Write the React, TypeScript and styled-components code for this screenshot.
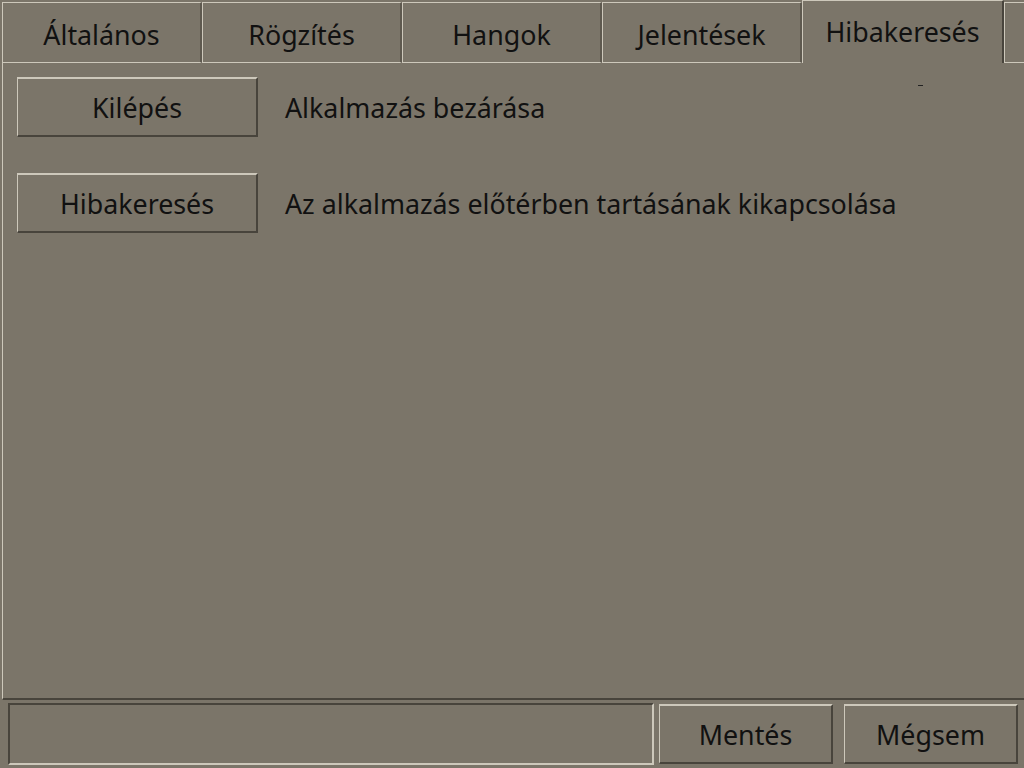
import React from 'react';
import styled, { createGlobalStyle } from 'styled-components';

const GlobalStyle = createGlobalStyle`
    html, body {
        margin: 0;
        padding: 0;
        background: #7b7569;
    }
    * {
        box-sizing: border-box;
    }
`;

const LIGHT = '#cdc8bb';
const DARK = '#48443c';

const Window = styled.div`
    display: flex;
    flex-direction: column;
    width: 1024px;
    height: 768px;
    overflow: hidden;
    background: #7b7569;
    color: #111;
    font-family: "Noto Sans", "Open Sans", sans-serif;
    font-size: 26.8px;
`;

const TabBar = styled.div`
    display: flex;
    flex-direction: row;
    align-items: flex-end;
    height: 63px;
    padding-left: 2px;
    flex-shrink: 0;
`;

const Tab = styled.div<{ $active?: boolean; $width?: number }>`
    display: flex;
    align-items: center;
    justify-content: center;
    width: ${p => p.$width ?? 200}px;
    height: ${p => (p.$active ? 63 : 61)}px;
    padding-top: ${p => (p.$active ? 0 : 3)}px;
    padding-bottom: ${p => (p.$active ? 2 : 0)}px;
    border-top: 1px solid ${LIGHT};
    border-left: 1px solid ${LIGHT};
    border-right: 2px solid ${p => (p.$active ? DARK : '#5e594f')};
    border-bottom: ${p => (p.$active ? 'none' : `1px solid ${LIGHT}`)};
    white-space: nowrap;
    flex-shrink: 0;
`;

const Panel = styled.div`
    position: relative;
    flex: 1;
    display: flex;
    flex-direction: column;
    gap: 36px;
    padding: 14px 14px;
    border-left: 1px solid ${LIGHT};
    border-bottom: 2px solid ${DARK};
    margin-left: 2px;
`;

const Row = styled.div`
    display: flex;
    flex-direction: row;
    align-items: center;
    gap: 27px;
`;

const Button = styled.button<{ $width?: number }>`
    width: ${p => p.$width ?? 241}px;
    height: 60px;
    margin: 0;
    padding: 0;
    background: #7b7569;
    color: #111;
    font: inherit;
    border-top: 2px solid ${LIGHT};
    border-left: 1px solid ${LIGHT};
    border-right: 2px solid ${DARK};
    border-bottom: 2px solid ${DARK};
    flex-shrink: 0;
`;

const Label = styled.span`
    white-space: nowrap;
`;

const Tick = styled.span`
    position: absolute;
    top: 22px;
    left: 915px;
    width: 5px;
    height: 1px;
    background: #222;
`;

const Footer = styled.div`
    display: flex;
    flex-direction: row;
    align-items: center;
    height: 68px;
    padding: 3px 6px 3px 8px;
    gap: 5px;
    flex-shrink: 0;
`;

const StatusBox = styled.div`
    flex: 1;
    height: 62px;
    border-top: 2px solid ${DARK};
    border-left: 2px solid ${DARK};
    border-right: 2px solid ${LIGHT};
    border-bottom: 2px solid ${LIGHT};
`;

const FooterButtons = styled.div`
    display: flex;
    gap: 11px;
    flex-shrink: 0;
`;

const tabs = ['Általános', 'Rögzítés', 'Hangok', 'Jelentések', 'Hibakeresés'];

export default function App() {
    return (
        <Window>
            <GlobalStyle />
            <TabBar>
                {tabs.map((t, i) => (
                    <Tab key={t} $active={i === 4} $width={i === 4 ? 202 : 200}>{t}</Tab>
                ))}
                <Tab $width={40} />
            </TabBar>
            <Panel>
                <Tick />
                <Row>
                    <Button>Kilépés</Button>
                    <Label>Alkalmazás bezárása</Label>
                </Row>
                <Row>
                    <Button>Hibakeresés</Button>
                    <Label>Az alkalmazás előtérben tartásának kikapcsolása</Label>
                </Row>
            </Panel>
            <Footer>
                <StatusBox />
                <FooterButtons>
                    <Button $width={174}>Mentés</Button>
                    <Button $width={174}>Mégsem</Button>
                </FooterButtons>
            </Footer>
        </Window>
    );
}
